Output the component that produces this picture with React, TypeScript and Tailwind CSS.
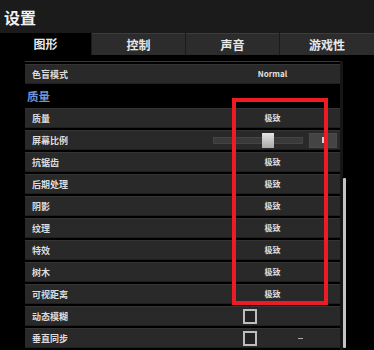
import React from "react";

const tabs = [
  { label: "图形", width: "w-[91px]", active: true },
  { label: "控制", width: "w-[93px]", active: false },
  { label: "声音", width: "w-[93px]", active: false },
  { label: "游戏性", width: "flex-1", active: false },
];

const maxRows = ["抗锯齿", "后期处理", "阴影", "纹理", "特效", "树木", "可视距离"];

function Row({ label, children }: { label: string; children?: React.ReactNode }) {
  return (
    <div className="flex h-[20px] mb-[2px] items-center bg-[#292929] border-t border-[#343434] border-b border-b-[#1f1f1f]">
      <div className="flex-1 pl-[7px] text-[9px] font-bold text-[#dcdcdc] leading-none">{label}</div>
      <div className="w-[135px] h-full flex items-center">{children}</div>
    </div>
  );
}

function Value({ text }: { text: string }) {
  return <div className="w-full text-center text-[8px] font-bold text-[#e0e0e0] leading-none">{text}</div>;
}

function Checkbox() {
  return <div className="ml-[38px] w-[14px] h-[15px] border-2 border-[#bdbdbd] bg-[#222]" />;
}

export default function App() {
  return (
    <div
      className="relative w-[374px] h-[350px] overflow-hidden bg-black text-white"
      style={{ fontFamily: '"Noto Sans CJK SC", "Noto Sans", sans-serif' }}
    >
      {/* 标题栏 */}
      <div className="h-[33px] bg-[#1b1b1b] flex items-center pl-[4px] text-[16px] font-bold text-[#f2f2f2]">
        设置
      </div>

      {/* 标签页 */}
      <div className="flex h-[22px] gap-[1px] bg-[#1b1b1b]">
        {tabs.map((t) => (
          <div
            key={t.label}
            className={
              t.active
                ? `${t.width} bg-black flex items-center justify-center text-[12px] font-bold text-[#e8e8e8]`
                : `${t.width} bg-[#2c2c2c] border-t border-[#3c3c3c] flex items-center justify-center text-[12px] font-bold text-[#e8e8e8]`
            }
          >
            {t.label}
          </div>
        ))}
      </div>

      <div className="h-[6px]" />

      <div className="flex">
        <div className="w-[25px]" />
        <div className="w-[315px]">
          <div className="h-[1px] bg-[#3a3a3a] mb-[2px]" />
          <Row label="色盲模式">
            <Value text="Normal" />
          </Row>
          <div className="h-[22px] flex items-center pl-[2px] text-[11.5px] font-bold text-[#6f93d6] leading-none">
            质量
          </div>
          <Row label="质量">
            <Value text="极致" />
          </Row>
          <Row label="屏幕比例">
            <div className="ml-[8px] relative w-[90px] h-[7px] bg-[#3a3a3a] border border-[#444]">
              <div className="absolute left-[48px] top-[-5px] w-[12px] h-[15px] bg-gradient-to-b from-[#e6e6e6] to-[#a9a9a9]" />
            </div>
            <div className="ml-[6px] w-[28px] h-[15px] bg-[#444] border border-[#4a4a4a] flex items-center justify-center">
              <div className="w-[3px] h-[6px] bg-[#cfcfcf]" />
            </div>
          </Row>
          {maxRows.map((r) => (
            <Row key={r} label={r}>
              <Value text="极致" />
            </Row>
          ))}
          <Row label="动态模糊">
            <Checkbox />
          </Row>
          <Row label="垂直同步">
            <Checkbox />
            <div className="ml-[41px] w-[5px] h-[1px] bg-[#aaa]" />
          </Row>
        </div>
        <div className="w-[7px] flex">
          <div className="w-[3px] bg-[#161616]" />
          <div className="w-[3px] mt-[117px] h-[170px] bg-[#c4c4c4] rounded-[1px]" />
        </div>
      </div>

      {/* 红框标注 */}
      <div className="absolute left-[232px] top-[98px] w-[96px] h-[207px] border-4 border-[#ed1c24]" />
    </div>
  );
}
